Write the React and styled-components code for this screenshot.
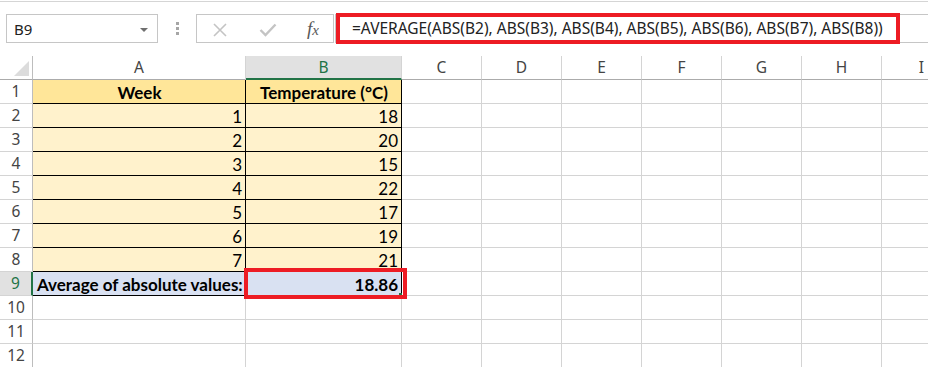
import React from "react";
import styled, { createGlobalStyle } from "styled-components";

const GlobalStyle = createGlobalStyle`
  html, body {
    margin: 0;
    padding: 0;
    background: #ffffff;
    overflow: hidden;
  }
  body {
    font-family: "Noto Sans", "Open Sans", sans-serif;
  }
`;

const rows = [
  { n: 1, a: "Week", b: "Temperature (°C)", kind: "head" },
  { n: 2, a: "1", b: "18", kind: "data" },
  { n: 3, a: "2", b: "20", kind: "data" },
  { n: 4, a: "3", b: "15", kind: "data" },
  { n: 5, a: "4", b: "22", kind: "data" },
  { n: 6, a: "5", b: "17", kind: "data" },
  { n: 7, a: "6", b: "19", kind: "data" },
  { n: 8, a: "7", b: "21", kind: "data" },
  { n: 9, a: "Average of absolute values:", b: "18.86", kind: "total" },
  { n: 10 },
  { n: 11 },
  { n: 12 },
];

const columns = ["A", "B", "C", "D", "E", "F", "G", "H", "I"];
const emptyCols = ["C", "D", "E", "F", "G", "H", "I"];

const fills = {
  head: "#ffe699",
  data: "#fff2cc",
  total: "#d9e1f2",
};

export default function App() {
  return (
    <Page>
      <GlobalStyle />
      <FormulaRow>
        <NameBox>
          <span>B9</span>
          <DropArrow />
        </NameBox>
        <Grip>
          <Dot />
          <Dot />
          <Dot />
        </Grip>
        <ButtonBox>
          <svg width="16" height="16" viewBox="0 0 16 16">
            <path d="M2 2 L14 14 M14 2 L2 14" stroke="#c4c4c4" strokeWidth="1.6" fill="none" />
          </svg>
          <svg width="18" height="14" viewBox="0 0 18 14">
            <path d="M1.5 7 L6.5 12 L16.5 1.5" stroke="#c4c4c4" strokeWidth="2.4" fill="none" />
          </svg>
          <FxLabel>
            f<small>x</small>
          </FxLabel>
        </ButtonBox>
        <FormulaInput>
          <Highlight>
            =AVERAGE(ABS(B2), ABS(B3), ABS(B4), ABS(B5), ABS(B6), ABS(B7), ABS(B8))
          </Highlight>
        </FormulaInput>
      </FormulaRow>

      <Sheet>
        <Corner>
          <Triangle />
        </Corner>
        {columns.map((c) => (
          <ColHeader key={c} $selected={c === "B"}>
            {c}
          </ColHeader>
        ))}

        {rows.map((r) => (
          <React.Fragment key={r.n}>
            <RowHeader $selected={r.n === 9}>{r.n}</RowHeader>
            <Cell
              $fill={fills[r.kind]}
              $boxed={!!r.kind}
              $bold={r.kind !== "data"}
              $align={r.kind === "head" ? "center" : r.kind === "total" ? "left" : "right"}
            >
              {r.a}
            </Cell>
            <Cell
              $fill={fills[r.kind]}
              $boxed={!!r.kind}
              $bold={r.kind !== "data"}
              $align={r.kind === "head" ? "center" : "right"}
            >
              {r.b}
              {r.kind === "total" && (
                <>
                  <RedFrame />
                  <FillHandle />
                </>
              )}
            </Cell>
            {emptyCols.map((c) => (
              <Cell key={c} />
            ))}
          </React.Fragment>
        ))}
      </Sheet>
    </Page>
  );
}

const Page = styled.div`
  width: 928px;
  height: 367px;
  overflow: hidden;
  padding-top: 1px;
  box-sizing: border-box;
`;

const FormulaRow = styled.div`
  display: flex;
  align-items: center;
  height: 55px;
  border-top: 1px solid #d5d5d5;
  box-sizing: border-box;
  padding: 0 0 1px 6px;
`;

const NameBox = styled.div`
  width: 152px;
  height: 29px;
  box-sizing: border-box;
  border: 1px solid #c6c6c6;
  display: flex;
  align-items: center;
  justify-content: space-between;
  padding: 0 9px 0 7px;
  font-size: 15px;
  color: #222;
`;

const DropArrow = styled.span`
  width: 0;
  height: 0;
  border-left: 4px solid transparent;
  border-right: 4px solid transparent;
  border-top: 4px solid #6f6f6f;
  margin-top: 2px;
`;

const Grip = styled.div`
  width: 38px;
  display: flex;
  flex-direction: column;
  align-items: center;
  gap: 2px;
`;

const Dot = styled.span`
  width: 3px;
  height: 3px;
  background: #a6a6a6;
`;

const ButtonBox = styled.div`
  width: 138px;
  height: 29px;
  box-sizing: border-box;
  border: 1px solid #c6c6c6;
  display: flex;
  align-items: center;
  justify-content: space-between;
  padding: 2px 14px 0 15px;
`;

const FxLabel = styled.span`
  font-family: "Liberation Serif", "DejaVu Serif", serif;
  font-style: italic;
  font-size: 19px;
  color: #595959;
  line-height: 1;
  margin-top: -2px;

  small {
    font-size: 15px;
  }
`;

const FormulaInput = styled.div`
  flex: 1;
  height: 29px;
  margin-left: 1px;
  box-sizing: border-box;
  border: 1px solid #c6c6c6;
  border-right: none;
  display: flex;
  align-items: center;
`;

const Highlight = styled.div`
  width: 564px;
  height: 31px;
  margin-top: -1px;
  box-sizing: border-box;
  border: 4px solid #ed1c24;
  display: flex;
  align-items: center;
  padding-left: 12px;
  font-size: 15.5px;
  color: #222;
  white-space: nowrap;
`;

const Sheet = styled.div`
  display: grid;
  grid-template-columns: 33px 213px 156px repeat(7, 80px);
  grid-auto-rows: 24px;
`;

const Corner = styled.div`
  position: relative;
  border-right: 1px solid #bdbdbd;
  border-bottom: 1px solid #ababab;
  box-sizing: border-box;
`;

const Triangle = styled.span`
  position: absolute;
  right: 3px;
  bottom: 3px;
  width: 0;
  height: 0;
  border-left: 15px solid transparent;
  border-bottom: 15px solid #dcdcdc;
`;

const ColHeader = styled.div`
  box-sizing: border-box;
  border-right: 1px solid #d4d4d4;
  border-bottom: ${(p) => (p.$selected ? "2px solid #217346" : "1px solid #ababab")};
  background: ${(p) => (p.$selected ? "#e1e1e1" : "#ffffff")};
  color: ${(p) => (p.$selected ? "#217346" : "#444")};
  font-size: 15.5px;
  line-height: 23px;
  text-align: center;
`;

const RowHeader = styled.div`
  box-sizing: border-box;
  border-bottom: 1px solid #d4d4d4;
  border-right: ${(p) => (p.$selected ? "2px solid #217346" : "1px solid #bdbdbd")};
  background: ${(p) => (p.$selected ? "#e1e1e1" : "#ffffff")};
  color: ${(p) => (p.$selected ? "#217346" : "#444")};
  font-size: 15.5px;
  line-height: 23px;
  text-align: center;
`;

const Cell = styled.div`
  position: relative;
  box-sizing: border-box;
  border-right: 1px solid ${(p) => (p.$boxed ? "#000" : "#d4d4d4")};
  border-bottom: 1px solid ${(p) => (p.$boxed ? "#000" : "#d4d4d4")};
  background: ${(p) => p.$fill || "#ffffff"};
  font-family: "Lato", "Liberation Sans", sans-serif;
  font-weight: ${(p) => (p.$bold ? 700 : 400)};
  font-size: 17px;
  line-height: 21px;
  padding: 2px 3px 0 4px;
  text-align: ${(p) => p.$align || "left"};
  color: #000;
  white-space: nowrap;
`;

const RedFrame = styled.span`
  position: absolute;
  z-index: 5;
  top: -4px;
  left: -2px;
  right: -6px;
  bottom: -4px;
  border: 4px solid #ed1c24;
  pointer-events: none;
`;

const FillHandle = styled.span`
  position: absolute;
  z-index: 4;
  right: -1px;
  bottom: -1px;
  width: 3px;
  height: 3px;
  background: #217346;
`;
